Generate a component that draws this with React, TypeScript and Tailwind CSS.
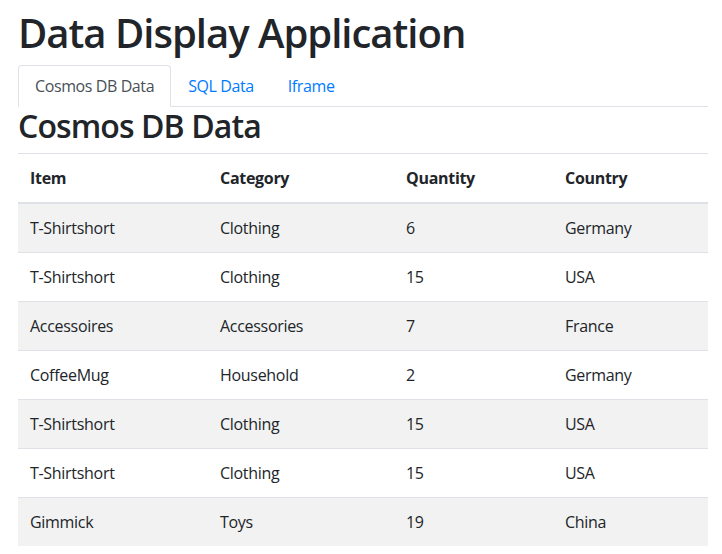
const rows = [
  { item: 'T-Shirtshort', category: 'Clothing', quantity: 6, country: 'Germany' },
  { item: 'T-Shirtshort', category: 'Clothing', quantity: 15, country: 'USA' },
  { item: 'Accessoires', category: 'Accessories', quantity: 7, country: 'France' },
  { item: 'CoffeeMug', category: 'Household', quantity: 2, country: 'Germany' },
  { item: 'T-Shirtshort', category: 'Clothing', quantity: 15, country: 'USA' },
  { item: 'T-Shirtshort', category: 'Clothing', quantity: 15, country: 'USA' },
  { item: 'Gimmick', category: 'Toys', quantity: 19, country: 'China' },
];

export default function App() {
  return (
    <div
      className="pl-[18px] pr-[14px] pt-[9px] text-[#212529] bg-white min-h-screen"
      style={{ fontFamily: '"Segoe UI", "Open Sans", sans-serif' }}
    >
      <h1 className="text-[40px] font-semibold leading-[1.2] mb-2 tracking-[-1px]">Data Display Application</h1>

      <ul className="flex border-b border-[#dee2e6] text-base leading-6 tracking-[-0.4px]">
        <li className="-mb-px">
          <a className="block px-4 py-2 border border-[#dee2e6] border-b-white rounded-t bg-white text-[#495057]">
            Cosmos DB Data
          </a>
        </li>
        <li className="-mb-px">
          <a className="block px-4 py-2 border border-transparent text-[#007bff]">SQL Data</a>
        </li>
        <li className="-mb-px">
          <a className="block px-4 py-2 border border-transparent text-[#007bff]">Iframe</a>
        </li>
      </ul>

      <h2 className="text-[32px] font-semibold leading-[1.2] mb-2 tracking-[-0.9px]">Cosmos DB Data</h2>

      <table className="w-[690px] table-fixed border-collapse text-base leading-6 text-left tracking-[-0.3px]">
        <colgroup>
          <col className="w-[190px]" />
          <col className="w-[186px]" />
          <col className="w-[159px]" />
          <col className="w-[155px]" />
        </colgroup>
        <thead>
          <tr>
            <th className="p-3 border-t border-b-2 border-[#dee2e6] font-bold">Item</th>
            <th className="p-3 border-t border-b-2 border-[#dee2e6] font-bold">Category</th>
            <th className="p-3 border-t border-b-2 border-[#dee2e6] font-bold">Quantity</th>
            <th className="p-3 border-t border-b-2 border-[#dee2e6] font-bold">Country</th>
          </tr>
        </thead>
        <tbody>
          {rows.map((r, i) => (
            <tr key={i} className={i % 2 === 0 ? 'bg-[#f2f2f2]' : ''}>
              <td className="p-3 border-t border-[#dee2e6]">{r.item}</td>
              <td className="p-3 border-t border-[#dee2e6]">{r.category}</td>
              <td className="p-3 border-t border-[#dee2e6]">{r.quantity}</td>
              <td className="p-3 border-t border-[#dee2e6]">{r.country}</td>
            </tr>
          ))}
        </tbody>
      </table>
    </div>
  );
}
